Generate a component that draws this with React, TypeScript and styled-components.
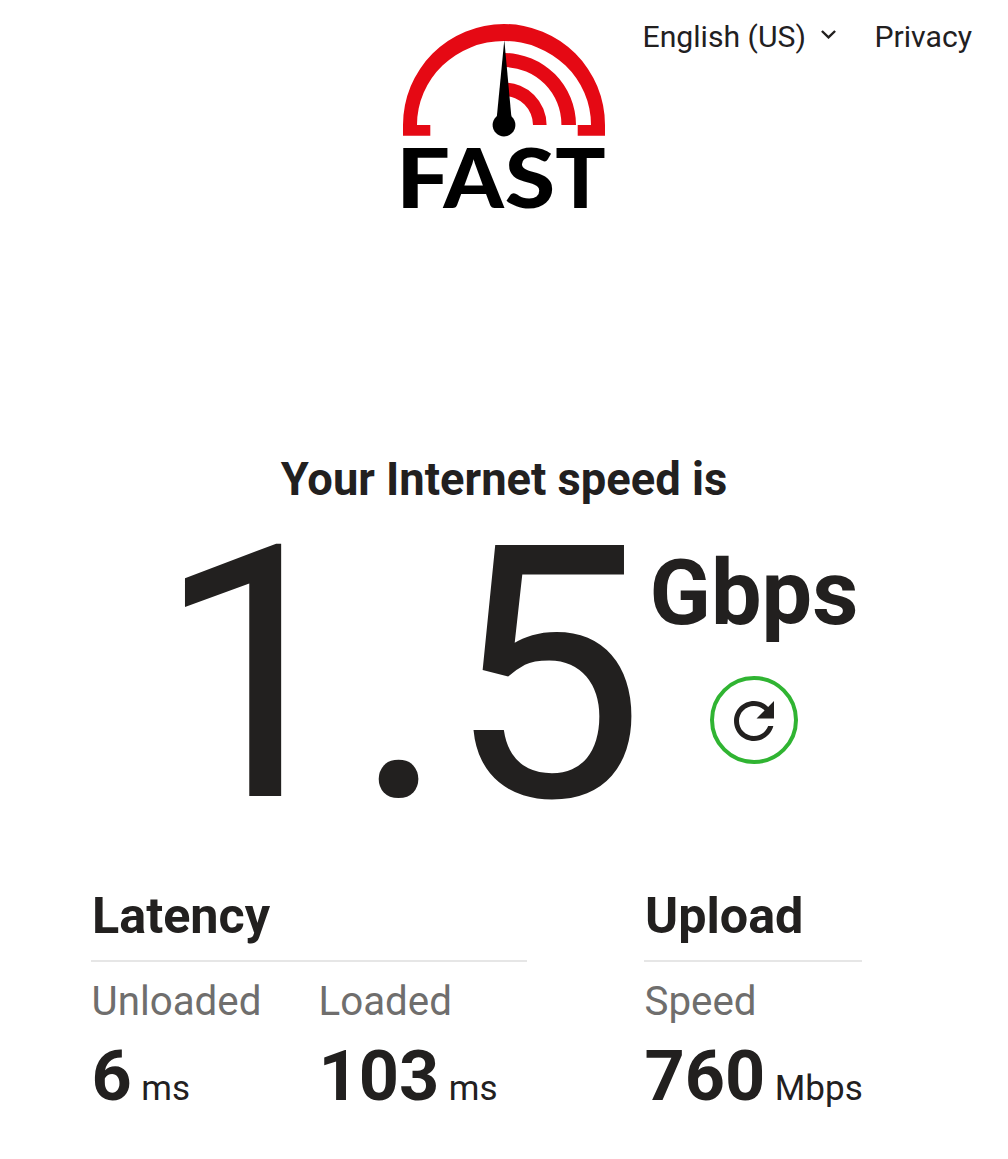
import React from "react";
import styled, { createGlobalStyle } from "styled-components";

const GlobalStyle = createGlobalStyle`
  *, *::before, *::after { box-sizing: border-box; }
  body {
    margin: 0;
    background: #fff;
    color: #22201f;
    font-family: Roboto, "Liberation Sans", sans-serif;
  }
`;

const Page = styled.div`
  width: 1008px;
  height: 1159px;
  overflow: hidden;
  display: flex;
  flex-direction: column;
`;

const Header = styled.header`
  display: grid;
  grid-template-columns: 1fr 204px 1fr;
  align-items: start;
  padding-top: 23px;
  height: 453px;
`;

const LogoLink = styled.a`
  grid-column: 2;
  display: block;
  height: 187px;
`;

const LogoSvg = styled.svg`
  display: block;
  overflow: visible;
  font-family: Lato, sans-serif;
  font-weight: 900;
`;

const Nav = styled.nav`
  display: flex;
  justify-content: flex-end;
  align-items: center;
  height: 28px;
  padding-right: 36px;
  font-size: 30.2px;
  line-height: 28px;
  white-space: nowrap;
`;

const Language = styled.span`
  display: flex;
  align-items: center;
  margin-right: 38px;
`;

const Chevron = styled.svg`
  width: 15px;
  height: 9px;
  margin: -6px 0 0 15.5px;
`;

const Title = styled.h1`
  margin: 0;
  height: 54px;
  font-size: 45.3px;
  line-height: 54px;
  font-weight: 700;
  text-align: center;
`;

const Result = styled.main`
  display: flex;
  height: 376px;
  padding-left: 155.5px;
`;

const SpeedValue = styled.div`
  width: 493.5px;
  height: 414px;
  margin-top: -38.5px;
  font-size: 353px;
  line-height: 414px;
  white-space: nowrap;
`;

const UnitColumn = styled.div`
  display: flex;
  flex-direction: column;
  align-items: center;
  width: 210px;
  padding-top: 35px;
`;

const Unit = styled.div`
  height: 104px;
  font-size: 90px;
  line-height: 104px;
  font-weight: 700;
`;

const RefreshButton = styled.button`
  display: flex;
  align-items: center;
  justify-content: center;
  width: 88px;
  height: 88px;
  margin: 30px 1px 0 0;
  padding: 2px 0 0;
  border: 4px solid #30b432;
  border-radius: 50%;
  background: #fff;
  color: #22201f;
`;

const Details = styled.section`
  display: flex;
  gap: 117px;
  padding-left: 91px;
`;

const Group = styled.div<{ $width: number }>`
  width: ${(p) => p.$width}px;
`;

const GroupTitle = styled.h2`
  margin: 0;
  height: 79px;
  padding-left: 1px;
  border-bottom: 2px solid #e6e6e6;
  font-size: 50.3px;
  line-height: 65px;
  font-weight: 700;
`;

const Metrics = styled.div`
  display: flex;
`;

const Metric = styled.div<{ $width: number }>`
  width: ${(p) => p.$width}px;
  white-space: nowrap;
`;

const MetricLabel = styled.div`
  height: 48px;
  margin-top: 16px;
  padding-left: 0.5px;
  font-size: 40.3px;
  line-height: 48px;
  color: #6f6e6d;
`;

const MetricValue = styled.div`
  display: flex;
  align-items: baseline;
  gap: 9.5px;
  height: 84px;
  margin-top: 8px;
  padding-left: 0.5px;
  line-height: 84px;
`;

const Number = styled.span`
  font-size: 70.2px;
  font-weight: 700;
`;

const MetricUnit = styled.span`
  font-size: 35px;
`;

const wordmark = [
  { letter: "F", x: 395.9, stretch: 1.18 },
  { letter: "A", x: 443.5, stretch: 1.06 },
  { letter: "S", x: 504.8, stretch: 1.13 },
  { letter: "T", x: 555.2, stretch: 1.03 },
];

function Logo() {
  return (
    <LogoSvg width="204" height="187" viewBox="402 23 204 187">
      <g fill="#e50914">
        <path d="M403 135.7V125a101 101 0 0 1 202 0v10.7h-27.3V125H591a87 84 0 0 0-174 0h13.3v10.7Z" />
        <path d="M504 53a72 72 0 0 1 72 72h-14.6A57.5 57.5 0 0 0 504 67Z" />
        <path d="M504 82.5A42.6 42.6 0 0 1 546.6 125H533a29 29 0 0 0-29-29Z" />
      </g>
      <path d="M504.3 40 496.8 117h14.6Z" />
      <circle cx="504" cy="125" r="11.4" />
      <g fontSize="81">
        {wordmark.map((w) => (
          <text key={w.letter} transform={`translate(${w.x} 208) scale(${w.stretch} 1)`}>
            {w.letter}
          </text>
        ))}
      </g>
    </LogoSvg>
  );
}

function RefreshIcon() {
  return (
    <svg width="60" height="60" viewBox="0 0 24 24" fill="currentColor" style={{ flex: "none" }}>
      <path d="M17.65 6.35C16.2 4.9 14.21 4 12 4c-4.42 0-7.99 3.58-7.99 8s3.57 8 7.99 8c3.73 0 6.84-2.55 7.73-6h-2.08c-.82 2.33-3.04 4-5.65 4-3.31 0-6-2.69-6-6s2.69-6 6-6c1.66 0 3.14.69 4.22 1.78L13 11h7V4l-2.35 2.35z" />
    </svg>
  );
}

function Stat(props: { label: string; value: string; unit: string; width: number }) {
  return (
    <Metric $width={props.width}>
      <MetricLabel>{props.label}</MetricLabel>
      <MetricValue>
        <Number>{props.value}</Number>
        <MetricUnit>{props.unit}</MetricUnit>
      </MetricValue>
    </Metric>
  );
}

export default function App() {
  return (
    <Page>
      <GlobalStyle />
      <Header>
        <LogoLink>
          <Logo />
        </LogoLink>
        <Nav>
          <Language>
            English (US)
            <Chevron viewBox="0 0 15 9" fill="none" stroke="#22201f" strokeWidth="2.4">
              <path d="M0.9 1 7.5 7.4 14.1 1" />
            </Chevron>
          </Language>
          <span>Privacy</span>
        </Nav>
      </Header>
      <Title>Your Internet speed is</Title>
      <Result>
        <SpeedValue>1.5</SpeedValue>
        <UnitColumn>
          <Unit>Gbps</Unit>
          <RefreshButton aria-label="Restart test">
            <RefreshIcon />
          </RefreshButton>
        </UnitColumn>
      </Result>
      <Details>
        <Group $width={436}>
          <GroupTitle>Latency</GroupTitle>
          <Metrics>
            <Stat label="Unloaded" value="6" unit="ms" width={227} />
            <Stat label="Loaded" value="103" unit="ms" width={209} />
          </Metrics>
        </Group>
        <Group $width={218}>
          <GroupTitle>Upload</GroupTitle>
          <Metrics>
            <Stat label="Speed" value="760" unit="Mbps" width={218} />
          </Metrics>
        </Group>
      </Details>
    </Page>
  );
}
